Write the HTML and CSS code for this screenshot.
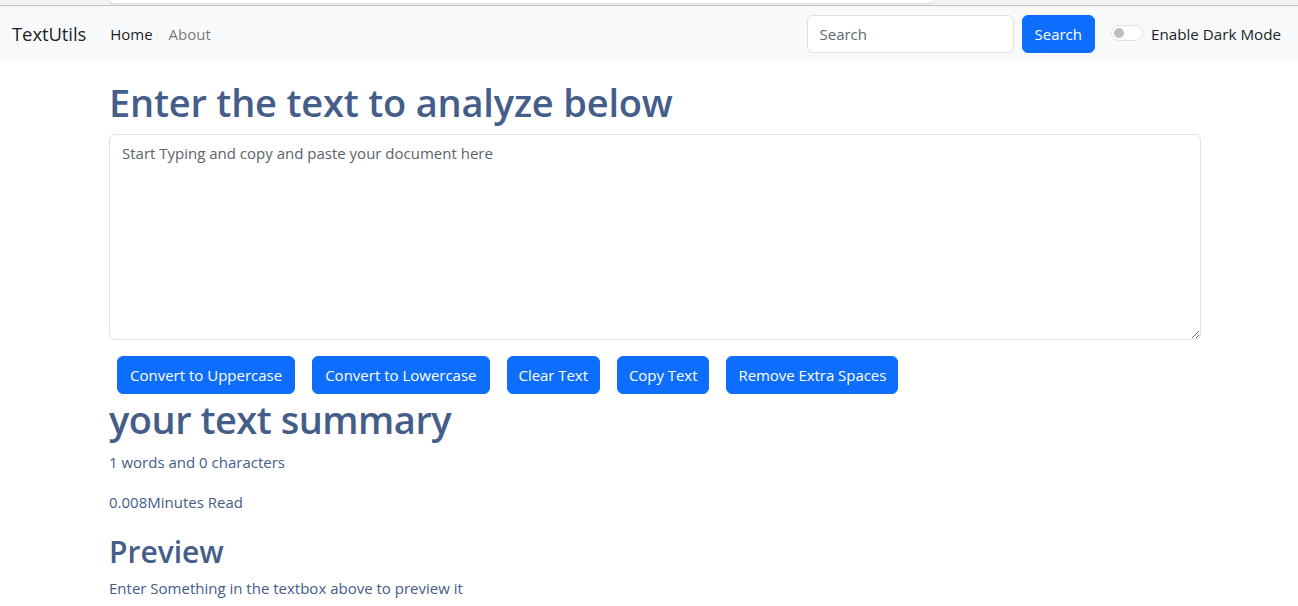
FILE: index.html
```html
<!DOCTYPE html>
<html lang="en">
<head>
<meta charset="utf-8">
<title>TextUtils</title>
<link rel="stylesheet" href="styles.css">
</head>
<body>
<div class="chrome"><div class="chrome-tab"></div></div>
<nav class="navbar">
  <a class="brand" href="#">TextUtils</a>
  <ul class="nav">
    <li><a class="nav-link active" href="#">Home</a></li>
    <li><a class="nav-link" href="#">About</a></li>
  </ul>
  <div class="spacer"></div>
  <form class="search">
    <input class="search-input" type="search" placeholder="Search">
    <button class="btn" type="button">Search</button>
  </form>
  <label class="switch">
    <span class="switch-track"><span class="switch-knob"></span></span>
    <span class="switch-label">Enable Dark Mode</span>
  </label>
</nav>
<main class="container">
  <h1 class="title">Enter the text to analyze below</h1>
  <textarea class="textbox" rows="8" placeholder="Start Typing and copy and paste your document here"></textarea>
  <div class="actions">
    <button class="btn" type="button">Convert to Uppercase</button>
    <button class="btn" type="button">Convert to Lowercase</button>
    <button class="btn" type="button">Clear Text</button>
    <button class="btn" type="button">Copy Text</button>
    <button class="btn" type="button">Remove Extra Spaces</button>
  </div>
  <section class="summary">
    <h1 class="title summary-title">your text summary</h1>
    <p class="text">1 words and 0 characters</p>
    <p class="text">0.008Minutes Read</p>
    <h2 class="subtitle">Preview</h2>
    <p class="text preview">Enter Something in the textbox above to preview it</p>
  </section>
</main>
</body>
</html>
```

FILE: styles.css
```css
* { box-sizing: border-box; }
html, body { margin: 0; padding: 0; background: #fff; }
body {
  font-family: "Open Sans", "Noto Sans", sans-serif;
  font-size: 15px;
  color: #212529;
  overflow: hidden;
}

.chrome {
  height: 6px;
  background: #f3f3f3;
  border-bottom: 1px solid #c2c2c2;
  position: relative;
}
.chrome-tab {
  position: absolute;
  left: 108px;
  width: 826px;
  top: -4px;
  height: 7px;
  background: #fff;
  border-radius: 0 0 6px 6px;
  box-shadow: 0 1px 2px rgba(0,0,0,0.12);
}

.navbar {
  height: 55px;
  background: #f8f9fa;
  display: flex;
  align-items: center;
  padding: 0 17px 0 12px;
}
.brand {
  font-size: 18.5px;
  color: rgba(0,0,0,0.9);
  text-decoration: none;
  margin-right: 16px;
  letter-spacing: -0.1px;
}
.nav {
  display: flex;
  list-style: none;
  margin: 0;
  padding: 0;
}
.nav-link {
  display: block;
  padding: 8px 8px;
  color: rgba(0,0,0,0.55);
  text-decoration: none;
  font-size: 15px;
}
.nav-link.active { color: rgba(0,0,0,0.9); }
.spacer { flex: 1; }

.search { display: flex; align-items: center; }
.search-input {
  width: 207px;
  height: 38px;
  border: 1px solid #dee2e6;
  border-radius: 6px;
  padding: 0 12px;
  font: inherit;
  font-size: 15px;
  color: #212529;
  background: #fff;
  margin-right: 8px;
  outline: none;
}
.search-input::placeholder { color: #60676e; }

.btn {
  height: 38px;
  padding: 0 12px;
  border: 1px solid #0d6efd;
  border-radius: 6px;
  background: #0d6efd;
  color: #fff;
  font-family: inherit;
  font-size: 15px;
  cursor: pointer;
}
.actions .btn { padding: 0 11px; letter-spacing: -0.05px; }
.actions .btn:first-child,
.actions .btn:nth-child(2) { padding: 0 12px; letter-spacing: 0; }

.switch {
  display: flex;
  align-items: center;
  margin-left: 16px;
  color: #212529;
}
.switch-track {
  width: 32px;
  height: 16px;
  border: 1px solid #dee2e6;
  border-radius: 8px;
  background: #fff;
  position: relative;
  margin-right: 8px;
  margin-top: -1px;
}
.switch-knob {
  position: absolute;
  left: 2px;
  top: 2px;
  width: 10px;
  height: 10px;
  border-radius: 50%;
  background: #bfbfbf;
}
.switch-label { font-size: 15.2px; }

.container {
  width: 1092px;
  margin-left: 109px;
  color: #445d89;
}
.title {
  font-size: 38px;
  font-weight: 600;
  line-height: 48px;
  margin: 17px 0 8px;
  letter-spacing: -0.2px;
}
.textbox {
  display: block;
  width: 100%;
  height: 206px;
  border: 1px solid #dee2e6;
  border-radius: 6px;
  padding: 6px 12px;
  font-family: inherit;
  font-size: 15px;
  line-height: 24px;
  color: #212529;
  resize: vertical;
  outline: none;
}
.textbox::placeholder { color: #5c636a; }

.actions {
  display: flex;
  gap: 17px;
  padding-left: 8px;
  margin-top: 16px;
}

.summary-title { margin: 1px 0 7px; letter-spacing: -0.5px; }
.text {
  margin: 0 0 16px;
  line-height: 24px;
}
.subtitle {
  font-size: 30px;
  font-weight: 600;
  line-height: 38px;
  margin: 19px 0 5px;
}
.preview { margin-bottom: 0; }
```
